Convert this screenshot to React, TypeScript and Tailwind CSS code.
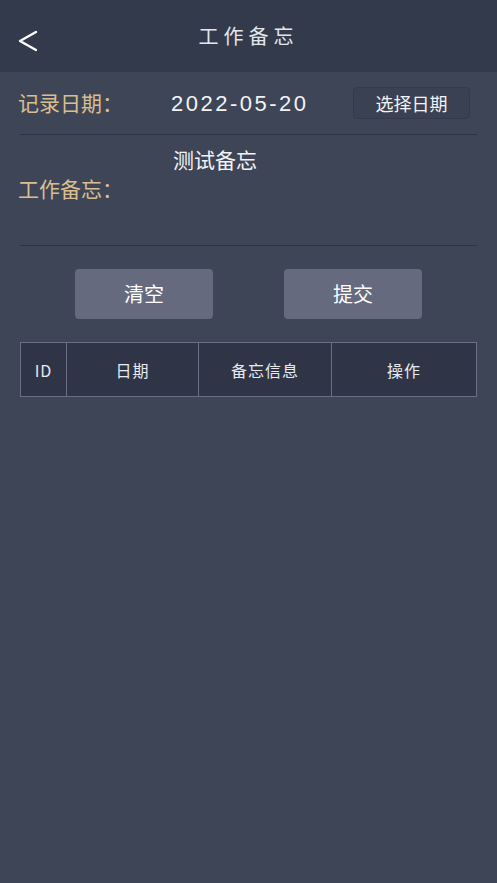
import React from 'react';

const font = { fontFamily: '"Noto Sans CJK SC", "Liberation Sans", sans-serif' };

const columns = [
  { label: 'ID', width: 'w-[45px]' },
  { label: '日期', width: 'w-[132px]' },
  { label: '备忘信息', width: 'w-[133px]' },
  { label: '操作', width: 'flex-1' },
];

const App: React.FC = () => {
  return (
    <div className="min-h-[883px] bg-[#3e4557] text-white" style={font}>
      {/* header */}
      <div className="relative flex h-[72px] items-center justify-center bg-[#323a4c]">
        <button className="absolute left-[12px] top-[24px] p-1">
          <svg width="24" height="26" viewBox="0 0 24 26" fill="none">
            <path d="M20 4 L4 13 L20 22" stroke="#ffffff" strokeWidth="2.4" strokeLinecap="round" strokeLinejoin="round" />
          </svg>
        </button>
        <h1 className="text-[20px] tracking-[5px] text-[#e4e6ec]">工作备忘</h1>
      </div>

      {/* record date */}
      <div className="mx-[20px] flex h-[63px] items-center border-b border-[#2e3445]">
        <span className="w-[153px] -ml-[2px] text-[21px] text-[#d8bf8f]">记录日期：</span>
        <span className="flex-1 text-[22px] tracking-[2.5px] text-[#f2f3f6]" style={{ fontFamily: '"Liberation Sans", sans-serif' }}>
          2022-05-20
        </span>
        <button className="mr-[7px] flex h-[32px] w-[117px] items-center justify-center rounded-[4px] border border-[#343a4b] bg-[#3a4153] text-[18px] text-[#f2f3f6]">
          选择日期
        </button>
      </div>

      {/* memo */}
      <div className="mx-[20px] flex h-[111px] border-b border-[#2e3445]">
        <span className="-ml-[2px] mt-[38px] w-[155px] text-[21px] text-[#d8bf8f]">工作备忘：</span>
        <span className="mt-[9px] text-[21px] text-[#f2f3f6]">测试备忘</span>
      </div>

      {/* actions */}
      <div className="mt-[23px] flex justify-center gap-[71px]">
        <button className="flex h-[50px] w-[138px] items-center justify-center rounded-[4px] bg-[#656a7e] text-[20px] text-white">
          清空
        </button>
        <button className="flex h-[50px] w-[138px] items-center justify-center rounded-[4px] bg-[#656a7e] text-[20px] text-white">
          提交
        </button>
      </div>

      {/* table */}
      <div className="mx-[20px] mt-[23px] flex h-[55px] border border-[#6a7083] bg-[#2f3547]">
        {columns.map((c, i) => (
          <div
            key={c.label}
            className={`${c.width} flex items-center justify-center text-[16px] tracking-[1px] text-[#e8eaef] ${i > 0 ? 'border-l border-[#6a7083]' : ''}`}
          >
            {c.label}
          </div>
        ))}
      </div>
    </div>
  );
};

export default App;
